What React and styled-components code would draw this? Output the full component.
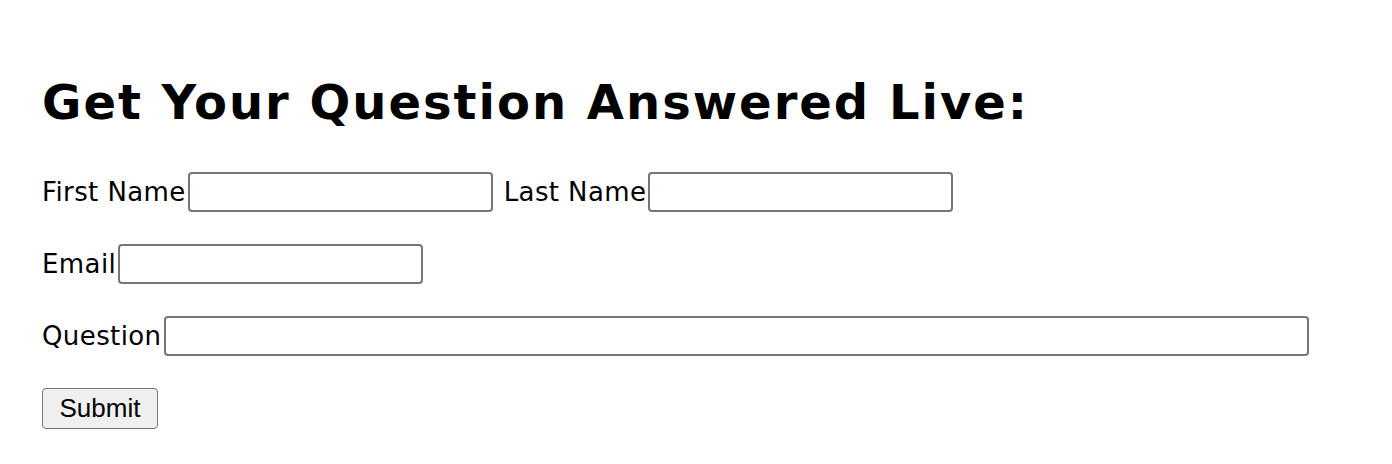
import React from 'react'
import styled, { createGlobalStyle } from 'styled-components'

const GlobalStyle = createGlobalStyle`
  body {
    margin: 0;
    background: #fff;
    color: #000;
  }
`

const Page = styled.div`
  padding: 72px 42px 0;
  font-family: "DejaVu Sans", Verdana, sans-serif;
`

const Title = styled.h1`
  margin: 0 0 40px;
  font-size: 48px;
  font-weight: 700;
  line-height: 60px;
  letter-spacing: 2px;
`

const Form = styled.form`
  display: flex;
  flex-direction: column;
  align-items: flex-start;
  gap: 32px;
`

const Row = styled.div`
  display: flex;
  align-items: center;
  height: 40px;
`

const Label = styled.label`
  font-size: 26px;
  letter-spacing: 0.4px;
  margin-left: ${p => (p.$spaced ? '11px' : '0')};
`

const Field = styled.input`
  box-sizing: border-box;
  width: ${p => p.$width || 305}px;
  height: 40px;
  margin: 0 0 0 2px;
  padding: 0 6px;
  border: 2px solid #767676;
  border-radius: 4px;
  background: #fff;
  font-size: 20px;
`

const Button = styled.button`
  box-sizing: border-box;
  width: 116px;
  height: 41px;
  padding: 0;
  border: 1.5px solid #767676;
  border-radius: 4px;
  background: #efefef;
  font-family: "Liberation Sans", Arial, sans-serif;
  font-size: 26px;
  color: #000;
`

export default function App() {
  return (
    <Page>
      <GlobalStyle />
      <Title>Get Your Question Answered Live:</Title>
      <Form onSubmit={e => e.preventDefault()}>
        <Row>
          <Label htmlFor="first">First Name</Label>
          <Field id="first" type="text" />
          <Label $spaced htmlFor="last">Last Name</Label>
          <Field id="last" type="text" />
        </Row>
        <Row>
          <Label htmlFor="email">Email</Label>
          <Field id="email" type="email" />
        </Row>
        <Row>
          <Label htmlFor="question">Question</Label>
          <Field id="question" type="text" $width={1145} />
        </Row>
        <Button type="submit">Submit</Button>
      </Form>
    </Page>
  )
}
